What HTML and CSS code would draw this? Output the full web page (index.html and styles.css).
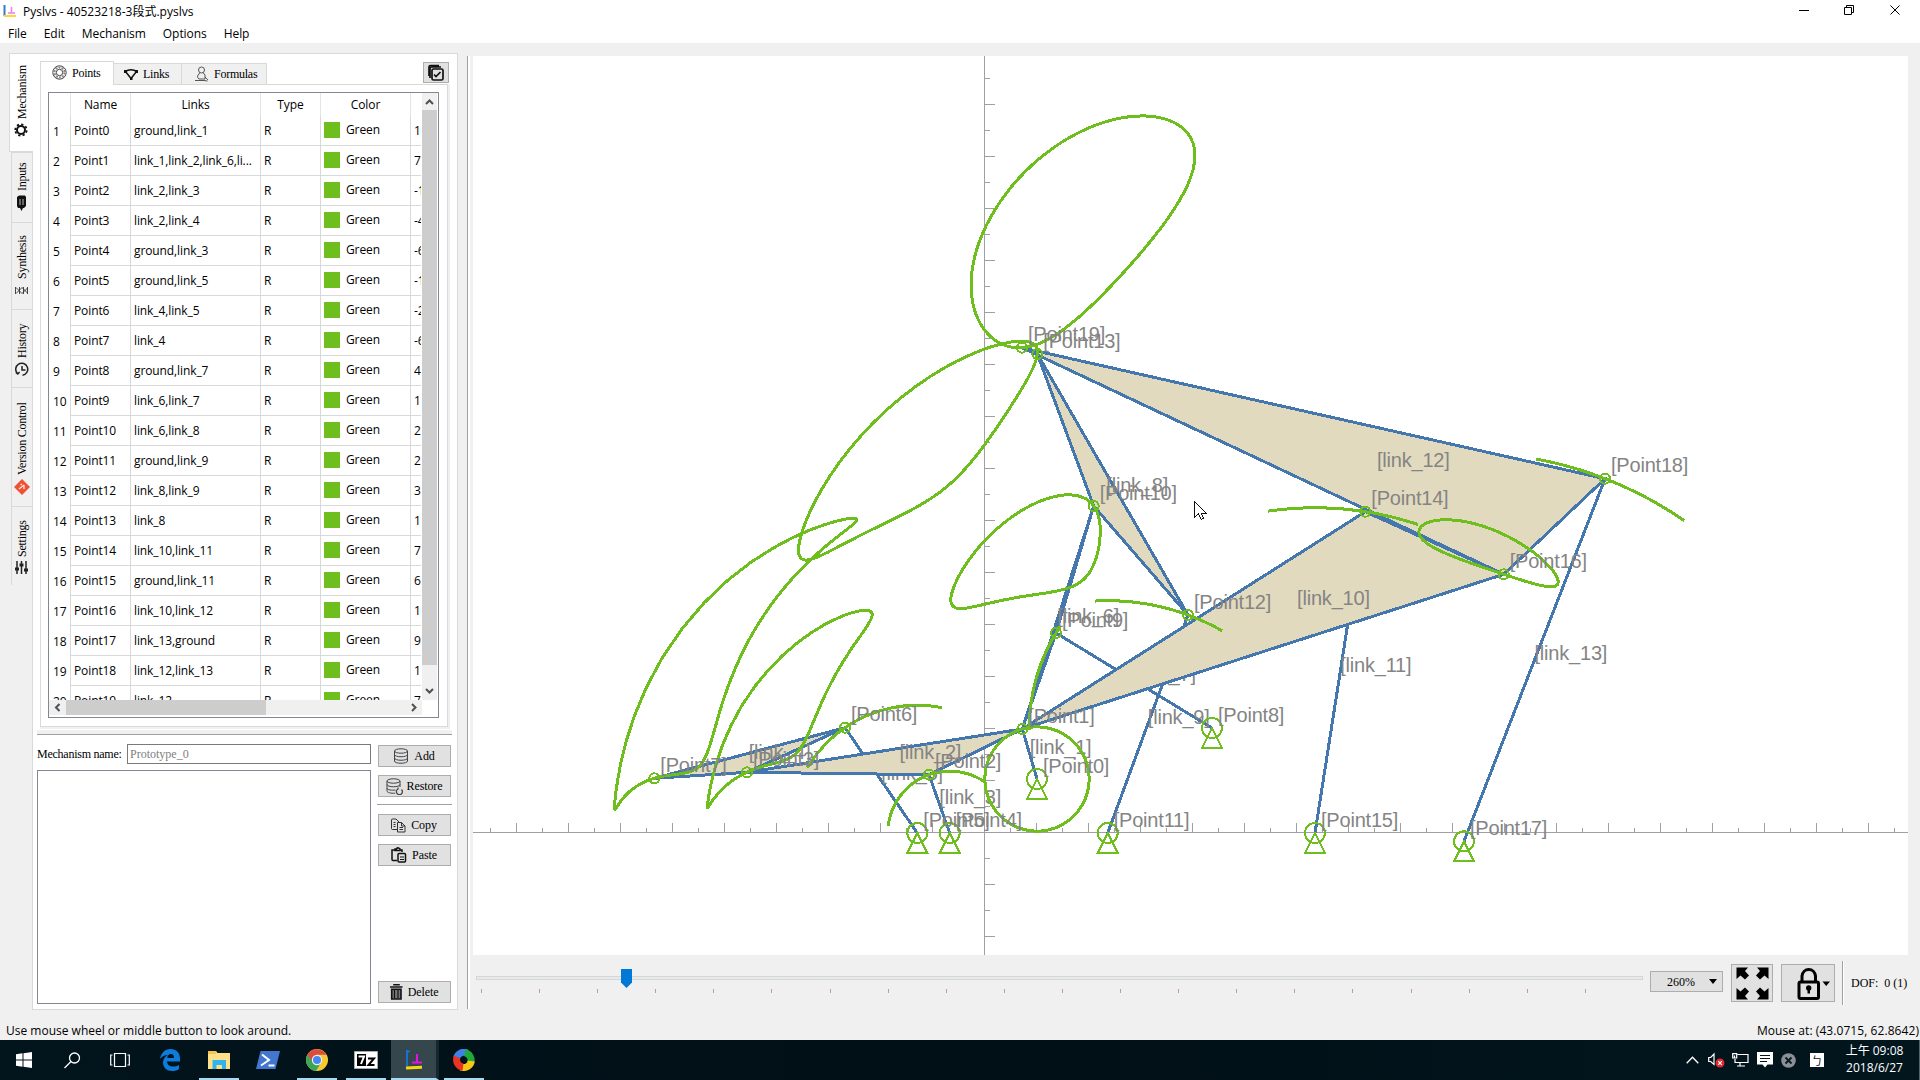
FILE: index.html
```html
<!DOCTYPE html>
<html lang="en">
<head>
<meta charset="utf-8">
<title>Pyslvs - 40523218-3段式.pyslvs</title>
<link rel="stylesheet" href="styles.css">
</head>
<body>
<header class="titlebar">
  <svg class="app-icon" width="14" height="14" viewBox="0 0 14 14"><path d="M1.5 1v11" stroke="#1673c8" stroke-width="2"/><path d="M1 12h12" stroke="#ffd21c" stroke-width="2"/><path d="M8.500 3v6M5 9h7" stroke="#f070e8" stroke-width="1.500"/></svg>
  <span class="window-title">Pyslvs - 40523218-3段式.pyslvs</span>
  <svg class="window-buttons" width="140" height="22" viewBox="0 0 140 22" fill="none" stroke="#000"><path d="M19 10.500h10M64.500 7.500h7v7h-7zM66.500 7v-1.500h7v7h-2M110.500 5.500l9 9M119.500 5.500l-9 9"/></svg>
</header>
<nav class="menubar"><span>File</span><span>Edit</span><span>Mechanism</span><span>Options</span><span>Help</span></nav>

<main class="workspace">
  <nav class="side-tabs">
    <div class="side-tab mechanism active"><svg width="14" height="14" viewBox="0 0 14 14"><circle cx="7" cy="7" r="4" fill="none" stroke="#111" stroke-width="2"/><circle cx="7" cy="7" r="5.700" fill="none" stroke="#111" stroke-width="1.800" stroke-dasharray="2.200 2.270"/></svg>Mechanism</div>
    <div class="side-tab inputs"><svg width="9" height="16" viewBox="0 0 9 16"><path d="M4.500 0L6 3h2l1 2v9l-2 1.500H1L0 14V5l2-2h1z" fill="#111"/><path d="M3 6v6M6 6v6" stroke="#bbb"/></svg>Inputs</div>
    <div class="side-tab synthesis"><svg width="13" height="7" viewBox="0 0 13 7"><path d="M.5 0v7M4.500 0v7M8.500 0v7M12.500 0v7M0 .5l6 6 6-6M0 6.500l6-6 6 6" fill="none" stroke="#333" stroke-width=".9"/></svg>Synthesis</div>
    <div class="side-tab history"><svg class="upright" width="14" height="14" viewBox="0 0 14 14" fill="none" stroke="#222" stroke-width="1.500"><path d="M2.500 11.500A6 6 0 1 1 7.500 13.200M7 4v4h3.500M.8 10.500l2 1.500 1.800-2"/></svg>History</div>
    <div class="side-tab version"><svg class="upright" width="16" height="16" viewBox="0 0 16 16"><path d="M8 0l8 8-8 8-8-8z" fill="#f05133"/><path d="M5 10l5-4M10 6v4M8 5L6.500 6" stroke="#ffd9cf" stroke-width="1.500"/></svg>Version Control</div>
    <div class="side-tab settings"><svg width="13" height="13" viewBox="0 0 13 13"><path d="M2 0v13M6.500 0v13M11 0v13" stroke="#222" stroke-width="1.500"/><path d="M0 4h4M4.500 9h4M9 5h4" stroke="#222" stroke-width="3"/></svg>Settings</div>
  </nav>

  <section class="panel">
    <div class="panel-head">
      <div class="top-tab points"><svg width="15" height="15" viewBox="0 0 15 15" fill="none" stroke="#444"><circle cx="7.500" cy="7.500" r="6.700"/><circle cx="7.500" cy="7.500" r="5" stroke="#888" stroke-width="2" stroke-dasharray="2 1.140"/><circle cx="7.500" cy="7.500" r="3.200"/></svg>Points</div>
      <div class="top-tab links"><svg width="16" height="13" viewBox="0 0 16 13" fill="none" stroke="#111"><path d="M2 3.500Q8 0 14 3.500M2.500 3.500L8 10.500l5.500-7" stroke-width="1.500"/><path d="M1 3.500h3M12 3.500h3M7 10.500h2.500" stroke-width="3"/></svg>Links</div>
      <div class="top-tab formulas"><svg width="15" height="16" viewBox="0 0 15 16" fill="none" stroke="#555"><circle cx="7.500" cy="4" r="3"/><path d="M6 6.500L3.500 10a3.700 3.700 0 0 0 1.500 3h6V9L9 6.500M1 14.500h9l3.500.5M14 14l-3-3"/></svg>Formulas</div>
      <button class="batch-button"><svg width="18" height="18" viewBox="0 0 18 18" fill="none" stroke="#111" stroke-width="1.700"><path d="M3 14V4.500Q3 3 4.500 3H14M2 12V3Q2 1.500 3.500 1.500H12"/><rect x="5" y="5" width="11" height="11" rx="1.500"/><path d="M7 10.500l2 2 4.500-4.500"/></svg></button>
    </div>
    <div class="table-pane">
      <div class="table-box">
        <div class="table-view">
          <table class="point-table">
            <colgroup><col class="c-index"><col class="c-name"><col class="c-links"><col class="c-type"><col class="c-color"><col class="c-x"></colgroup>
            <thead><tr><th></th><th>Name</th><th>Links</th><th>Type</th><th>Color</th><th></th></tr></thead>
            <tbody id="point-rows"></tbody>
          </table>
        </div>
        <div class="scroll-y"><svg width="15" height="17" viewBox="0 0 15 17"><path d="M4 11l3.500-3.500L11 11" fill="none" stroke="#505050" stroke-width="2"/></svg><div class="thumb-y"></div><svg class="scroll-end" width="15" height="17" viewBox="0 0 15 17"><path d="M4 6l3.500 3.500L11 6" fill="none" stroke="#505050" stroke-width="2"/></svg></div>
        <div class="scroll-x"><svg width="17" height="15" viewBox="0 0 17 15"><path d="M10.500 4L7 7.500l3.500 3.500" fill="none" stroke="#505050" stroke-width="2"/></svg><div class="thumb-x"></div><svg class="scroll-end" width="17" height="15" viewBox="0 0 17 15"><path d="M7 4l3.500 3.500L7 11" fill="none" stroke="#505050" stroke-width="2"/></svg></div>
      </div>
    </div>
    <div class="splitter-h"></div>
    <div class="storage">
      <div class="storage-main">
        <div class="name-row"><label>Mechanism name:</label><div class="name-input">Prototype_0</div></div>
        <div class="storage-list"></div>
      </div>
      <div class="storage-buttons">
        <button class="push"><svg width="16" height="16" viewBox="0 0 16 16" fill="none" stroke="#444"><ellipse cx="8" cy="3" rx="6.500" ry="2.200"/><path d="M1.500 3v10c0 3 13 3 13 0V3M1.500 6.500c0 3 13 3 13 0M1.500 10c0 3 13 3 13 0"/></svg>Add</button>
        <button class="push restore"><svg width="17" height="17" viewBox="0 0 17 17" fill="none" stroke="#444"><ellipse cx="7.500" cy="3" rx="6.500" ry="2.200"/><path d="M1 3v10c0 1.500 4 2.500 8 2.200M14 3v6M1 6.500c0 3 13 3 13 0M1 10c0 2 5 2.500 8.500 2"/><path d="M15.500 11.500a3 3 0 1 1-3.500-.5M12 9.500v2" stroke-width="1.300"/></svg>Restore</button>
        <div class="button-rule"></div>
        <button class="push copy"><svg width="15" height="15" viewBox="0 0 15 15" fill="none" stroke="#333"><path d="M6 11.500H1.500Q.5 11.500.5 10.500V2Q.5 1 1.500 1H5L8 4M2.500 4.500h2M2.500 6.500h2M2.500 8.500h2"/><path d="M6.500 4.500h4l3.500 3.500v6H6.500zM10.500 4.500V8H14M8.500 9.500h3.500M8.500 11.500h3.500"/></svg>Copy</button>
        <button class="push paste"><svg width="16" height="16" viewBox="0 0 16 16" fill="none" stroke="#111" stroke-width="1.500"><path d="M6 13.500H2Q1 13.500 1 12.500V3h2.500M9 3h2v2M4 3.500V2h1.500Q6 .5 7.500 1L9 2v1.500z"/><rect x="7" y="6.500" width="7.500" height="8.500" rx="1"/><path d="M9 10h4M9 12.500h4" stroke-width="1"/></svg>Paste</button>
        <button class="push delete"><svg width="13" height="16" viewBox="0 0 13 16"><path d="M4 1.500V.7h5v.8M0 3h12.500" stroke="#111" stroke-width="1.600" fill="none"/><path d="M1.700 5.200h9.300v9.800H1.700z" fill="#777" stroke="#111" stroke-width="1.600"/><path d="M4.500 5v9M8 5v9" stroke="#111" stroke-width="1.200"/></svg>Delete</button>
      </div>
    </div>
  </section>

  <div class="splitter-v"></div>

  <section class="viewer">
    <svg class="linkage" id="linkage" width="1435" height="899" viewBox="473 56 1435 899" shape-rendering="crispEdges">
      <g stroke="#a0a0a4" fill="none">
        <path d="M473 832.500H1908M984.500 56V955"/>
        <path d="M516 827.500H1908" stroke-width="10" stroke-dasharray="1 51"/>
        <path d="M490 830H1908" stroke-width="5" stroke-dasharray="1 51"/>
        <path d="M989.500 104V955" stroke-width="10" stroke-dasharray="1 51"/>
        <path d="M987 78V955" stroke-width="5" stroke-dasharray="1 51"/>
      </g>
      <g id="links"></g>
      <g id="paths" class="trace"></g>
      <g id="joints"></g>
      <path d="M1194.500 501.500v16l3.800-3.500 3 5.500 2.500-1.200-2.700-5.300h5z" fill="#fff" stroke="#111"/>
    </svg>
    <div class="controls">
      <div class="slider"><div class="groove"></div><svg class="handle" width="11" height="19" viewBox="0 0 11 19"><path d="M0 0h11v13.500L5.500 19 0 13.500z" fill="#0078d7"/></svg><div class="ticks" id="ticks"></div></div>
      <button class="zoom-combo"><span>260%</span><svg width="8" height="5" viewBox="0 0 8 5"><path d="M0 0h8L4 5z"/></svg></button>
      <button class="fit"><svg width="33" height="33" viewBox="0 0 33 33"><g id="fit-arrow"><path d="M.5.5H12L9 4l4 4.500L9 12.500 4.500 8.500.5 12z"/></g><use href="#fit-arrow" transform="matrix(-1 0 0 1 33 0)"/><use href="#fit-arrow" transform="matrix(1 0 0 -1 0 33)"/><use href="#fit-arrow" transform="rotate(180 16.500 16.500)"/></svg></button>
      <button class="lock"><svg width="34" height="33" viewBox="0 0 34 33"><rect x="2" y="15" width="19.500" height="16.500" rx="1.500" fill="none" stroke="#000" stroke-width="3"/><path d="M5 14V9a6.800 7.500 0 0 1 13.500 0v5" fill="none" stroke="#000" stroke-width="3"/><circle cx="11.700" cy="21" r="2.700"/><path d="M10.500 21h2.500v5.500h-2.500zM25.500 14.500h7.500L29.200 19z"/></svg></button>
      <div class="dof-rule"></div>
      <span class="dof">DOF:&nbsp; 0 (1)</span>
    </div>
  </section>
</main>

<footer class="statusbar"><span>Use mouse wheel or middle button to look around.</span><span class="mouse-at">Mouse at: (43.0715, 62.8642)</span></footer>

<div class="taskbar">
  <div class="task first"><svg width="16" height="16" viewBox="0 0 16 16" fill="#fff"><path d="M0 2.200L6.500 1.300V7.500H0zM7.500 1.200L16 0v7.500H7.500zM0 8.500h6.500v6.200L0 13.800zM7.500 8.500H16V16l-8.500-1.200z"/></svg></div>
  <div class="task search"><svg width="17" height="17" viewBox="0 0 17 17" fill="none" stroke="#fff" stroke-width="1.300"><circle cx="10.500" cy="6" r="5"/><path d="M7 9.500L.5 16"/></svg></div>
  <div class="task views"><svg width="20" height="16" viewBox="0 0 20 16" fill="none" stroke="#fff" stroke-width="1.200"><path d="M4.500 1.500h11v13h-11zM2.500 3H.7v10h1.800M17.500 3h1.800v10h-1.800"/></svg></div>
  <div class="task"><svg width="20" height="22" viewBox="0 0 20 22"><path d="M0 10C1 4 5 0 10.500 0 16.500 0 20 4 20 9.500V12.500H7c0 3 3 5 6 5 2.500 0 4-.5 6-1.500v4C17 21.500 15 22 12 22 7 22 3 18.500 3 13.500 3 10 5 7.500 8 6 4 6 1.500 8 0 10zM7.200 9H14C14 6.500 13 5 10.800 5 8.500 5 7.500 7 7.200 9z" fill="#0d7ddb"/></svg></div>
  <div class="task open"><svg width="22" height="18" viewBox="0 0 22 18"><path d="M0 0h8l1.500 2H22v16H0z" fill="#ffe08a"/><path d="M0 0h8v3H0z" fill="#f5c54f"/><path d="M4.500 9h13.500v9h-4v-4H8.500v4h-4z" fill="#2fb4ec"/></svg></div>
  <div class="task"><svg width="24" height="18" viewBox="0 0 24 18"><path d="M4.500 0H24l-4.500 18H0z" fill="#4376cf"/><path d="M6 3.500l7 5.500-8 5.500M12.500 14.500h6" fill="none" stroke="#fff" stroke-width="2"/></svg></div>
  <div class="task open"><svg width="22" height="22" viewBox="0 0 22 22"><circle cx="11" cy="11" r="11" fill="#f6c933"/><path d="M11 11L1.500 5.500A11 11 0 0 0 10 22l5.500-9z" fill="#3aa757"/><path d="M1.500 5.500A11 11 0 0 1 20.500 5.800H11L6.500 13.500z" fill="#dd4b3e"/><circle cx="11" cy="11" r="5.200" fill="#f2f2f2"/><circle cx="11" cy="11" r="4" fill="#4688f1"/></svg></div>
  <div class="task open"><svg width="24" height="18" viewBox="0 0 24 18"><path d="M.5.5h23v17H.5z" fill="#fff" stroke="#aaa"/><path d="M3 3h9v12H3z"/><path d="M4.500 5.500h5.500L7 13" fill="none" stroke="#fff" stroke-width="2"/><path d="M14 7.500h6l-5.500 6.500H20.500" fill="none" stroke="#000" stroke-width="2"/></svg></div>
  <div class="task open current"><svg width="18" height="20" viewBox="0 0 18 20"><path d="M2 0v16M1 1.500h4" stroke="#1673c8" stroke-width="2" fill="none"/><path d="M1 18l16-.8" stroke="#f6d812" stroke-width="3"/><path d="M12 4v8M7 12.500h10" stroke="#e212e0" stroke-width="2"/></svg></div>
  <div class="task open"><svg width="22" height="22" viewBox="0 0 22 22" fill="none" stroke-width="7"><path d="M3.500 9A7.500 7.500 0 0 1 14 4.100" stroke="#3f82e6"/><path d="M12 3.700A7.500 7.500 0 0 1 17.500 14" stroke="#20a83a"/><path d="M18.300 12A7.500 7.500 0 0 1 8 17.900" stroke="#f8c614"/><path d="M10 18.300A7.500 7.500 0 0 1 4.200 8" stroke="#ea3323"/></svg></div>
  <div class="tray">
    <svg width="13" height="8" viewBox="0 0 13 8"><path d="M.7 7.300l5.800-6 5.800 6" fill="none" stroke="#fff" stroke-width="1.300"/></svg>
    <svg width="17" height="16" viewBox="0 0 17 16"><path d="M.7 5.500h2L6 2v10.500L2.700 9.500h-2z" fill="none" stroke="#fff" stroke-width="1.200"/><circle cx="12" cy="11" r="4.500" fill="#e0262e"/><path d="M10.200 9.200l3.600 3.600M13.800 9.200l-3.600 3.600" stroke="#fff" stroke-width="1.200"/></svg>
    <svg width="17" height="14" viewBox="0 0 17 14" fill="none" stroke="#fff" stroke-width="1.200"><path d="M5.500 1.500H16v8H3V6M8 10v3M5 13h8M.7.7h4V5h-4zM2.500 2.500v2"/></svg>
    <svg width="16" height="16" viewBox="0 0 16 16"><path d="M0 0h16v12.500h-5.500L8 15.500l-2.500-3H0z" fill="#fff"/><path d="M3 3.500h10M3 6.500h10M3 9.500h7" stroke="#02131b" stroke-width="1.200"/></svg>
    <svg width="15" height="15" viewBox="0 0 15 15"><circle cx="7.500" cy="7.500" r="7.300" fill="#8a9093"/><path d="M4.500 4.500l6 6M10.500 4.500l-6 6" stroke="#061820" stroke-width="1.800"/></svg>
    <span class="ime">ㄅ</span>
    <div class="clock"><div>上午 09:08</div><div>2018/6/27</div></div>
  </div>
</div>
<script src="app.js"></script>
</body>
</html>
```
FILE: styles.css
```css
* { box-sizing: border-box; }
body {
  margin: 0; width: 1920px; height: 1080px; overflow: hidden;
  display: flex; flex-direction: column;
  background: #f0f0f0; color: #000;
  font: 12px/16px "Open Sans", "Noto Sans CJK TC", sans-serif;
}
svg { display: block; flex: none; }
button { padding: 0; border: 1px solid #adadad; background: #e1e1e1; color: #000; font: inherit; }

.titlebar { height: 22px; display: flex; align-items: center; background: #fff; padding-left: 3px; }
.app-icon { opacity: .9; }
.window-title { margin-left: 6px; flex: 1; padding-top: 2px; }
.menubar { height: 21px; display: flex; gap: 17px; padding: 4px 0 0 8px; background: #fff; letter-spacing: -.06px; }

.workspace { height: 967px; display: flex; padding-top: 10px; }

/* Left-hand tab strip and its page */
.side-tabs { width: 24px; margin-left: 9px; display: flex; flex-direction: column; align-items: flex-end; z-index: 1; }
.side-tab {
  writing-mode: vertical-rl; transform: rotate(180deg);
  display: flex; align-items: center; gap: 4px; padding: 11px 0 0;
  width: 22px; border: 1px solid #d9d9d9; border-top: 0;
  background: #f0f0f0; font: 12px/20px "Liberation Serif", serif; letter-spacing: -.25px;
}
.side-tab.active { width: 24px; border-left: 0; border-top: 1px solid #d9d9d9; background: #fff; padding-top: 14px; }
.upright { transform: rotate(180deg); }
.mechanism { height: 99px; }
.inputs { height: 70px; }
.side-tab.synthesis { height: 87px; gap: 8px; padding-top: 15px; }
.history { height: 78px; }
.version { height: 119px; }
.settings { height: 79px; }

.panel {
  width: 426px; height: 957px; margin-left: -1px;
  border: 1px solid #d9d9d9; background: #fff; padding: 7px 5px 5px 4px;
  font-family: "Liberation Serif", serif; letter-spacing: -.25px;
}
.panel-head { height: 24px; display: flex; align-items: flex-end; padding-left: 3px; }
.top-tab { display: flex; align-items: center; height: 22px; border: 1px solid #d9d9d9; background: #f0f0f0; gap: 5px; }
.top-tab.points { width: 74px; height: 24px; background: #fff; border-bottom: 0; padding: 0 0 2px 11px; z-index: 1; }
.top-tab.links { width: 68px; border-left: 0; padding-left: 9px; gap: 4px; }
.top-tab.formulas { width: 85px; border-left: 0; padding-left: 12px; }
.batch-button { width: 26px; height: 21px; margin: 0 3px 2px auto; display: grid; place-items: center; overflow: hidden; }
.table-pane { margin: -1px 5px 0 3px; height: 643px; width: 408px; border: 1px solid #d9d9d9; padding: 7px; box-shadow: 1px 1px 0 1px #f0f0f0; }
.table-box {
  width: 391px; height: 626px; border: 1px solid #828790;
  display: grid; grid-template: 607px 15px / 373px 15px; background: #fff;
}
.table-view { overflow: hidden; font-family: "Open Sans", sans-serif; letter-spacing: -.1px; }
.point-table { table-layout: fixed; width: 372px; border-collapse: separate; border-spacing: 0; }
.c-index { width: 21px; } .c-name { width: 60px; } .c-links { width: 130px; }
.c-type { width: 60px; } .c-color { width: 90px; } .c-x { width: 11px; }
th { height: 23px; padding: 1px 0 0; font-weight: 400; border-left: 1px solid #e5e5e5; }
th:first-child { border-left: 0; }
td { height: 30px; padding: 0 0 0 3px; white-space: nowrap; overflow: hidden; border: 1px solid #d9d9d9; border-width: 0 0 1px 1px; }
td:first-child { border: 0; padding: 1px 0 0 4px; }
.swatch { display: inline-block; width: 16px; height: 16px; background: #6ebe1e; vertical-align: middle; margin: 0 6px 2px 0; }
.scroll-y { background: #f0f0f0; display: flex; flex-direction: column; }
.thumb-y { height: 555px; background: #cdcdcd; }
.scroll-x { background: #f0f0f0; display: flex; }
.thumb-x { width: 200px; background: #cdcdcd; }
.scroll-end { margin: auto 0 0 auto; }
.splitter-h { height: 5px; margin: 3px 0 0; background: #f0f0f0; border-bottom: 1px solid #a0a0a0; }
.storage { display: flex; margin-top: 9px; gap: 7px; }
.storage-main { width: 334px; }
.name-row { display: flex; justify-content: space-between; align-items: center; height: 20px; white-space: nowrap; }
.name-input { width: 244px; height: 20px; border: 1px solid #7a7a7a; color: #808080; padding: 1px 2px; letter-spacing: 0; }
.storage-list { height: 234px; margin-top: 6px; border: 1px solid #828790; }
.storage-buttons { width: 73px; display: flex; flex-direction: column; padding-top: 1px; }
.push { width: 73px; height: 22px; flex: none; display: flex; align-items: center; justify-content: center; gap: 5px; padding-right: 1px; letter-spacing: -.1px; }
.restore { margin-top: 8px; gap: 4px; }
.button-rule { height: 1px; margin: 7px -1px 9px; background: #a0a0a0; }
.paste { margin-top: 8px; }
.delete { margin-top: auto; margin-bottom: 1px; }

.splitter-v { width: 3px; height: 953px; margin: 3px 3px 0 9px; border-left: 1px solid #a0a0a0; background: #fff; }

/* Drawing area */
.viewer { width: 1447px; padding-top: 3px; }
.linkage { background: #fff; }
.linkage text { font: 20px "Liberation Sans", sans-serif; fill: #848484; letter-spacing: -.2px; }
.link { stroke: #4477ae; stroke-width: 3; fill: #e2dabe; }
.trace { stroke: #6ebe1e; stroke-width: 3; fill: none; }
.joint { stroke: #6ebe1e; stroke-width: 2; fill: none; }

.controls { display: flex; align-items: center; height: 56px; font: 12px/16px "Liberation Serif", serif; white-space: nowrap; }
.slider { position: relative; flex: none; width: 1167px; height: 30px; margin: 0 0 2px 3px; padding-top: 9px; }
.groove { height: 4px; border: 1px solid #d6d6d6; background: #e7eaea; }
.handle { position: absolute; left: 145px; top: 2px; }
.ticks { display: flex; justify-content: space-between; margin: 9px 57px 0 5px; }
.ticks i { width: 1px; height: 4px; background: #aaa799; }
.zoom-combo { flex: none; width: 73px; height: 21px; margin: 0 0 3px 7px; padding: 0 5px 0 16px; display: flex; align-items: center; justify-content: space-between; }
.fit { flex: none; width: 42px; height: 38px; margin-left: 8px; display: grid; place-items: center; }
.lock { flex: none; width: 54px; height: 38px; margin-left: 8px; padding-left: 15px; }
.dof-rule { flex: none; width: 2px; height: 44px; margin-left: 7px; border-left: 1px solid #a0a0a0; background: #fff; }
.dof { margin-left: 7px; }

.statusbar { height: 30px; display: flex; justify-content: space-between; padding: 13px 1px 0 6px; }
.mouse-at { letter-spacing: .07px; }

.taskbar { height: 40px; display: flex; background: linear-gradient(90deg, #02141c, #010f16 50%, #02161e); color: #fff; }
.task { width: 48px; margin-right: 1px; display: grid; place-items: center; border-bottom: 2px solid transparent; padding-top: 2px; }
.task.first, .task.search { margin-right: 0; }
.task.views { margin-right: 2px; }
.task.open { width: 40px; margin: 0 5px 0 4px; border-color: #a7dcf0; }
.task.current { width: 48px; margin: 0 1px 0 0; background: #36464d; border-right: 3px solid #17272e; }
.tray { margin-left: auto; display: flex; align-items: center; width: 234px; }
.tray svg:nth-child(2) { margin-left: 9px; }
.tray svg:nth-child(3) { margin-left: 7px; }
.tray svg:nth-child(4) { margin-left: 8px; }
.tray svg:nth-child(5) { margin-left: 8px; }
.ime { width: 14px; height: 14px; margin-left: 14px; background: #fff; color: #111; font: 11px/14px "Noto Sans CJK TC", sans-serif; text-align: center; overflow: hidden; }
.clock { flex: 1; height: 40px; margin-left: 12px; border-right: 1px solid #56646a; padding: 2px 6px 0 0; text-align: center; line-height: 17px; }
```
FILE: app.js
```js
// [links, visible part of the X column]
const rows = [
  ['ground,link_1', '1'], ['link_1,link_2,link_6,li...', '7'], ['link_2,link_3', '-1'],
  ['link_2,link_4', '-4'], ['ground,link_3', '-6'], ['ground,link_5', '-1'],
  ['link_4,link_5', '-2'], ['link_4', '-6'], ['ground,link_7', '4'],
  ['link_6,link_7', '1'], ['link_6,link_8', '2'], ['ground,link_9', '2'],
  ['link_8,link_9', '3'], ['link_8', '1'], ['link_10,link_11', '7'],
  ['ground,link_11', '6'], ['link_10,link_12', '1'], ['link_13,ground', '9'],
  ['link_12,link_13', '1'], ['link_12', '7'],
];
document.getElementById('point-rows').innerHTML = rows.map(([links, x], i) =>
  `<tr><td>${i + 1}</td><td>Point${i}</td><td>${links}</td><td>R</td>` +
  `<td><span class="swatch"></span>Green</td><td>${x}</td></tr>`).join('');
document.getElementById('ticks').innerHTML = '<i></i>'.repeat(20);

// Joint positions on the canvas
const joints = [
  [1037, 779], [1022.3, 729], [929, 774.7], [747, 772.3], [949.7, 833],
  [917.3, 833], [845, 727.7], [654.3, 778.3], [1212, 728], [1056, 633],
  [1093.7, 506], [1107.7, 833], [1188, 615], [1037.3, 354], [1365.3, 511.7],
  [1315, 833], [1503.7, 574.3], [1464, 841.3], [1605, 478.7], [1022, 347.7],
];
const grounded = [0, 4, 5, 8, 11, 15, 17];

// Two-joint links lie below the plates
const links = [
  ['link_1', 0, 1], ['link_3', 2, 4], ['link_5', 5, 6], ['link_7', 8, 9],
  ['link_9', 11, 12], ['link_11', 14, 15], ['link_13', 17, 18],
  ['link_2', 1, 2, 3], ['link_4', 3, 6, 7], ['link_6', 1, 9, 10],
  ['link_8', 10, 12, 13], ['link_10', 1, 14, 16], ['link_12', 16, 18, 19],
];
document.getElementById('links').innerHTML = links.map(([name, ...ids]) => {
  const cx = ids.reduce((s, i) => s + joints[i][0], 0) / ids.length;
  const cy = ids.reduce((s, i) => s + joints[i][1], 0) / ids.length;
  return `<polygon class="link" points="${ids.map(i => joints[i]).join(' ')}"/>` +
    `<text x="${cx}" y="${cy}">[${name}]</text>`;
}).join('');

document.getElementById('joints').innerHTML = joints.map(([x, y], i) => {
  const fixed = grounded.includes(i);
  const shape = fixed
    ? `<path class="joint" d="M${x} ${y}l-10 20h20z"/><circle class="joint" cx="${x}" cy="${y}" r="10"/>`
    : `<circle class="joint" cx="${x}" cy="${y}" r="5"/>`;
  return shape + `<text x="${x + 6}" y="${y - 6.5}">[Point${i}]</text>`;
}).join('');

// Linkage solver: dyads keep their assembly side, plates keep their shape
const dist = (a, b) => Math.hypot(a[0] - b[0], a[1] - b[1]);
const side = (a, b, c) => Math.sign((b[0] - a[0]) * (c[1] - a[1]) - (b[1] - a[1]) * (c[0] - a[0]));
function dyad(p, a, b, c) {
  const r1 = dist(joints[a], joints[c]), r2 = dist(joints[b], joints[c]);
  const [A, B] = [p[a], p[b]], d = dist(A, B);
  const u = (r1 * r1 - r2 * r2 + d * d) / (2 * d);
  const h2 = r1 * r1 - u * u;
  if (h2 < 0) return false;
  const h = Math.sqrt(h2) * side(joints[a], joints[b], joints[c]);
  const ex = (B[0] - A[0]) / d, ey = (B[1] - A[1]) / d;
  p[c] = [A[0] + u * ex - h * ey, A[1] + u * ey + h * ex];
  return true;
}
const steps = [
  [1, 4, 2], [1, 2, 3], [3, 5, 6], [3, 6, 7], [1, 8, 9], [1, 9, 10],
  [10, 11, 12], [10, 12, 13], [1, 15, 14], [1, 14, 16], [16, 17, 18], [16, 18, 19],
];
const traces = joints.map(() => []);
const radius = dist(joints[0], joints[1]);
const start = Math.atan2(joints[1][1] - joints[0][1], joints[1][0] - joints[0][0]);
for (let deg = 0; deg <= 360; deg += 4) {
  const t = start - deg * Math.PI / 180;
  const p = joints.slice();
  p[1] = [joints[0][0] + radius * Math.cos(t), joints[0][1] + radius * Math.sin(t)];
  traces[1].push(p[1]);
  for (const [a, b, c] of steps) {
    if (!dyad(p, a, b, c)) break;
    traces[c].push(p[c]);
  }
}
document.getElementById('paths').innerHTML = traces.filter(t => t.length).map(t =>
  `<polyline points="${t.map(q => q.map(v => v.toFixed(1))).join(' ')}"/>`).join('');
```
